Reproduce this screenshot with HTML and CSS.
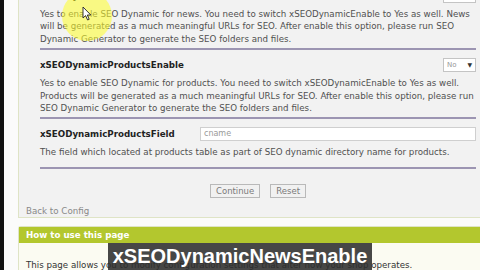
FILE: index.html
```html
<!DOCTYPE html>
<html lang="en">
<head>
<meta charset="UTF-8" />
<title>Configuration - SEO Dynamic</title>
<link rel="stylesheet" href="styles.css">
</head>
<body>

<div class="screen">
    <div class="edge"></div>
    <div class="page">

        <div class="panel">
            <div class="fields">
                <!-- previous field, scrolled mostly out of view -->
                <div class="field">
                    <div class="field-head">
                        <span class="field-name">xSEODynamicNewsEnable</span>
                        <span class="select">Yes <span class="arrow">&#9660;</span></span>
                    </div>
                    <p class="field-desc">Yes to enable SEO Dynamic for news. You need to switch xSEODynamicEnable to Yes as well. News will be generated as a much meaningful URLs for SEO. After enable this option, please run SEO Dynamic Generator to generate the SEO folders and files.</p>
                </div>

                <div class="field">
                    <div class="field-head">
                        <span class="field-name">xSEODynamicProductsEnable</span>
                        <span class="select">No <span class="arrow">&#9660;</span></span>
                    </div>
                    <p class="field-desc">Yes to enable SEO Dynamic for products. You need to switch xSEODynamicEnable to Yes as well. Products will be generated as a much meaningful URLs for SEO. After enable this option, please run SEO Dynamic Generator to generate the SEO folders and files.</p>
                </div>

                <div class="field last">
                    <div class="field-head">
                        <span class="field-name wide">xSEODynamicProductsField</span>
                        <span class="input">cname</span>
                    </div>
                    <p class="field-desc">The field which located at products table as part of SEO dynamic directory name for products.</p>
                </div>

                <div class="buttons">
                    <span class="btn">Continue</span>
                    <span class="btn">Reset</span>
                </div>
            </div>
            <div class="back">Back to Config</div>
        </div>

        <div class="help">
            <div class="help-title">How to use this page</div>
            <div class="help-body">This page allows you to modify configuration settings that alter how your shop operates.</div>
        </div>
    </div>

    <!-- cursor highlight -->
    <div class="spot"></div>
    <svg class="cursor" width="10" height="15" viewBox="0 0 10 15">
        <path d="M1 1 L1 12 L3.6 9.6 L5.6 14 L7.2 13.3 L5.3 9 L8.8 9 Z" fill="#fff" stroke="#222" stroke-width="0.9"/>
    </svg>

    <div class="caption">xSEODynamicNewsEnable</div>
</div>

</body>
</html>
```

FILE: styles.css
```css
body {
    margin: 0;
    padding: 0;
    background: #ffffff;
    font-family: "DejaVu Sans", Verdana, sans-serif;
    font-size: 8.7px;
    color: #505050;
}

.screen {
    position: relative;
    display: flex;
    width: 480px;
    height: 270px;
    overflow: hidden;
}

.edge {
    width: 4px;
    background: #111;
}

.page {
    flex: 1;
    padding-left: 14px;
    background: #fbfbfb;
}

.panel {
    margin-top: -12px;
    border: 1px solid #dfe4c6;
    border-right: none;
    background: #f2f2f2;
}

.fields {
    padding: 0 4px 0 21px;
}

.field {
    border-bottom: 2px solid #9c95b2;
    padding-bottom: 3px;
    margin-bottom: 8px;
}

.field.last {
    padding-bottom: 8px;
}

.field-head {
    display: flex;
    align-items: center;
    justify-content: space-between;
    height: 14px;
}

.field-name {
    font-weight: bold;
    color: #222;
}

.field-name.wide {
    width: 160px;
}

.select {
    width: 28px;
    height: 12px;
    line-height: 12px;
    border: 1px solid #c4c4c4;
    background: #fff;
    color: #999;
    padding-left: 3px;
    font-size: 7px;
}

.select .arrow {
    float: right;
    margin-right: 3px;
    color: #333;
    font-size: 6px;
}

.input {
    flex: 1;
    height: 12px;
    line-height: 12px;
    border: 1px solid #cfcfcf;
    background: #fff;
    color: #999;
    padding-left: 3px;
    font-size: 8px;
}

.field-desc {
    margin: 5px 0 0;
    line-height: 12.4px;
}

.buttons {
    display: flex;
    justify-content: center;
    gap: 10px;
    padding: 7px 0 7px;
}

.btn {
    height: 12px;
    line-height: 12px;
    padding: 0 5px;
    border: 1px solid #b9b9b9;
    background: #f1f1f1;
    color: #7a7a7a;
    font-size: 8.5px;
}

.back {
    height: 12px;
    line-height: 12px;
    padding: 0 7px;
    color: #888;
}

.help {
    margin-top: 8px;
    border: 1px solid #dfe4c6;
    border-right: none;
    border-radius: 3px 0 0 0;
    background: #fbfbf2;
}

.help-title {
    height: 16px;
    line-height: 16px;
    background: #b3c72e;
    color: #fff;
    font-weight: bold;
    padding-left: 7px;
}

.help-body {
    padding: 17px 7px 14px;
    color: #333;
}

.spot {
    position: absolute;
    left: 62px;
    top: -9px;
    width: 50px;
    height: 50px;
    border-radius: 50%;
    background: rgba(255, 255, 40, 0.55);
}

.cursor {
    position: absolute;
    left: 82px;
    top: 6px;
}

.caption {
    position: absolute;
    left: 108px;
    top: 243px;
    width: 264px;
    height: 27px;
    line-height: 27px;
    background: rgba(45, 45, 45, 0.88);
    color: #fff;
    font-family: "Liberation Sans", Arial, sans-serif;
    font-weight: bold;
    font-size: 20px;
    text-align: center;
}
```
